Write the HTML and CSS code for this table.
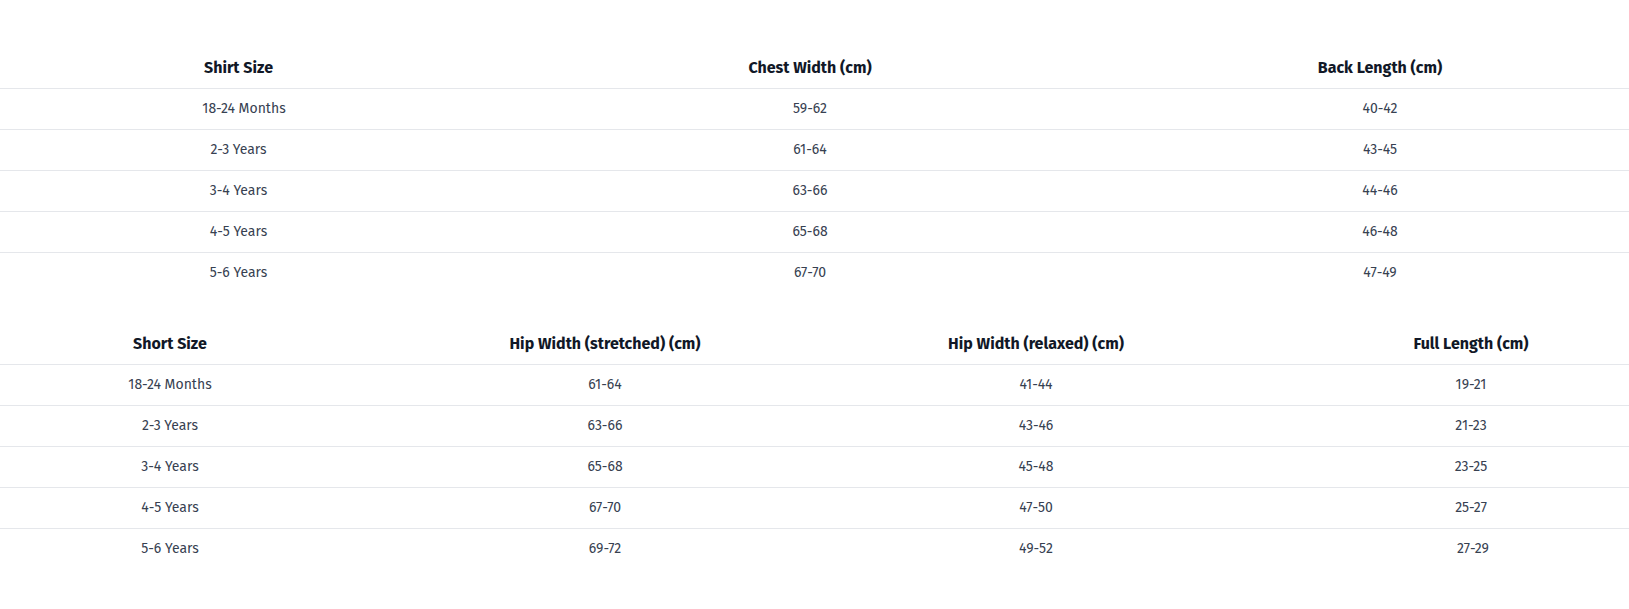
FILE: index.html
```html
<!DOCTYPE html>
<html lang="en">
<head>
<meta charset="utf-8">
<title>Size Guide</title>
<link rel="stylesheet" href="styles.css">
</head>
<body>
<div class="page">
  <table class="size-table shirt">
    <colgroup><col class="s1"><col class="s2"><col class="s3"></colgroup>
    <thead>
      <tr><th>Shirt Size</th><th>Chest Width (cm)</th><th class="last">Back Length (cm)</th></tr>
    </thead>
    <tbody>
      <tr><td class="indent">18-24 Months</td><td>59-62</td><td class="last">40-42</td></tr>
      <tr><td>2-3 Years</td><td>61-64</td><td class="last">43-45</td></tr>
      <tr><td>3-4 Years</td><td>63-66</td><td class="last">44-46</td></tr>
      <tr><td>4-5 Years</td><td>65-68</td><td class="last">46-48</td></tr>
      <tr><td>5-6 Years</td><td>67-70</td><td class="last">47-49</td></tr>
    </tbody>
  </table>

  <table class="size-table shorts">
    <colgroup><col class="h1"><col class="h2"><col class="h3"><col class="h4"></colgroup>
    <thead>
      <tr><th>Short Size</th><th>Hip Width (stretched) (cm)</th><th>Hip Width (relaxed) (cm)</th><th>Full Length (cm)</th></tr>
    </thead>
    <tbody>
      <tr><td>18-24 Months</td><td>61-64</td><td>41-44</td><td>19-21</td></tr>
      <tr><td>2-3 Years</td><td>63-66</td><td>43-46</td><td>21-23</td></tr>
      <tr><td>3-4 Years</td><td>65-68</td><td>45-48</td><td>23-25</td></tr>
      <tr><td>4-5 Years</td><td>67-70</td><td>47-50</td><td>25-27</td></tr>
      <tr><td>5-6 Years</td><td>69-72</td><td>49-52</td><td>&nbsp;27-29</td></tr>
    </tbody>
  </table>
</div>
</body>
</html>
```

FILE: styles.css
```css
html, body {
  margin: 0;
  padding: 0;
  background: #ffffff;
}

body {
  font-family: "Fira Sans", Roboto, "Noto Sans", sans-serif;
  color: #374151;
  overflow-x: hidden;
}

.page {
  padding-top: 48px;
  overflow: hidden;
}

.size-table {
  border-collapse: collapse;
  table-layout: fixed;
  font-size: 14px;
}

.size-table th,
.size-table td {
  text-align: center;
  padding: 12px 0;
  line-height: 16px;
  white-space: nowrap;
}

.size-table th {
  font-weight: 700;
  font-size: 16px;
  color: #111827;
  border-bottom: 1px solid #e5e7eb;
}

.size-table tbody tr + tr td {
  border-top: 1px solid #e5e7eb;
}

.shirt {
  width: 1629px;
}

.shirt .s1 { width: 477px; }
.shirt .s2 { width: 666px; }
.shirt .s3 { width: 486px; }
.shirt .last { padding-right: 12px; }
.shirt .indent { padding-left: 11px; }

.shorts {
  width: 1740px;
  margin-top: 31px;
}

.shorts .h1 { width: 340px; }
.shorts .h2 { width: 530px; }
.shorts .h3 { width: 332px; }
.shorts .h4 { width: 538px; }
```
